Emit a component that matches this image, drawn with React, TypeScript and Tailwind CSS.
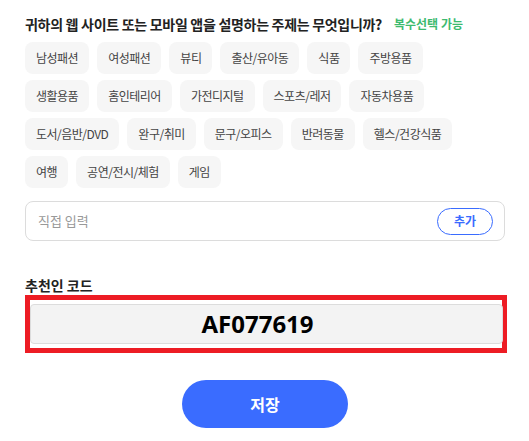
import React from "react";

const rows = [
  ["남성패션", "여성패션", "뷰티", "출산/유아동", "식품", "주방용품"],
  ["생활용품", "홈인테리어", "가전디지털", "스포츠/레저", "자동차용품"],
  ["도서/음반/DVD", "완구/취미", "문구/오피스", "반려동물", "헬스/건강식품"],
  ["여행", "공연/전시/체험", "게임"],
];

export default function App() {
  return (
    <div
      className="w-[529px] h-[441px] bg-white pl-[25px] pr-[24px] pt-[14px]"
      style={{ fontFamily: '"Noto Sans CJK KR", "Noto Sans", sans-serif' }}
    >
      <div className="flex items-center h-[20px]">
        <span className="text-[14px] font-bold text-[#222] tracking-[-0.3px]">
          귀하의 웹 사이트 또는 모바일 앱을 설명하는 주제는 무엇입니까?
        </span>
        <span className="ml-[12px] text-[12px] font-bold text-[#3dba6f]">복수선택 가능</span>
      </div>
      <div className="mt-[8px] flex flex-col gap-[6px]">
        {rows.map((row, i) => (
          <div key={i} className="flex gap-[8px]">
            {row.map((c) => (
              <div
                key={c}
                className="h-[32px] px-[11px] rounded-[8px] bg-[#f6f6f6] flex items-center text-[12px] tracking-[-0.5px] text-[#444]"
              >
                {c}
              </div>
            ))}
          </div>
        ))}
      </div>
      <div className="mt-[13px] w-[480px] h-[40px] border border-[#dcdcdc] rounded-[8px] flex items-center pl-[12px] pr-[11px]">
        <span className="flex-1 text-[13px] text-[#999]">직접 입력</span>
        <div className="w-[56px] h-[27px] rounded-full border border-[#3a6cff] flex items-center justify-center text-[12px] font-bold text-[#3a6cff]">
          추가
        </div>
      </div>
      <div className="mt-[34px] h-[20px] flex items-center text-[14px] font-bold text-[#222]">추천인 코드</div>
      <div className="w-[482px] h-[58px] border-[5px] border-[#ed1c24] pt-[4px]">
        <div className="h-[40px] -mr-[1px] bg-[#f3f3f3] border border-[#dcdcdc] rounded-[4px] flex items-center justify-center">
          <span
            className="text-[24px] font-bold text-black pr-[18px]"
            style={{ fontFamily: '"Noto Sans", "Open Sans", sans-serif' }}
          >
            AF077619
          </span>
        </div>
      </div>
      <div className="mt-[27px] flex justify-center">
        <div className="w-[166px] h-[48px] rounded-full bg-[#3a6cff] flex items-center justify-center text-[16px] font-bold text-white">
          저장
        </div>
      </div>
    </div>
  );
}
